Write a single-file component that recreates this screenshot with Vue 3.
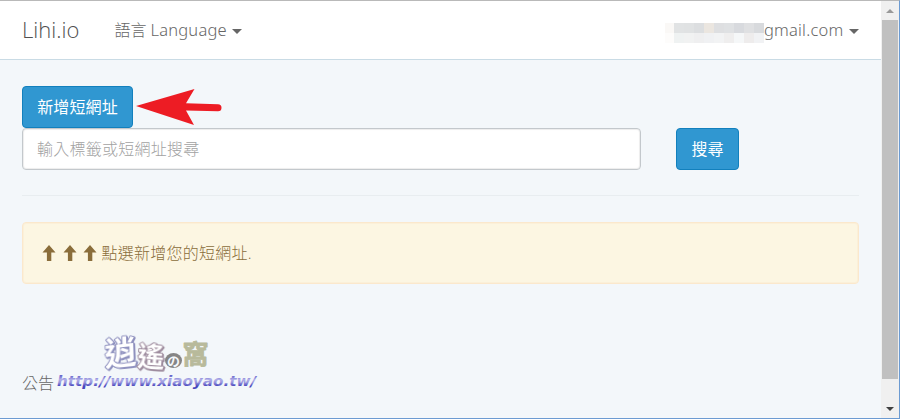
<template>
  <div class="window">
    <div class="page">
      <header class="navbar">
        <a class="brand">Lihi.io</a>
        <a class="nav-link language">
          <span>語言</span>
          <span class="latin">Language</span>
          <span class="caret"></span>
        </a>
        <a class="nav-link account">
          <span class="mosaic">
            <i v-for="(c, i) in mosaic" :key="i" :style="{ background: c }"></i>
          </span>
          <span class="latin mail">gmail.com</span>
          <span class="caret"></span>
        </a>
      </header>

      <main class="content">
        <div class="create-row">
          <button class="btn btn-create">新增短網址</button>
          <svg class="pointer" width="88" height="38" viewBox="0 0 88 38">
            <path d="M0 18 L58.500 1 L50 15.200 L82 16.200 A3.500 3.500 0 0 1 82 23.200 L50 22.500 L58 37 Z" fill="#ed1c24" />
          </svg>
        </div>

        <form class="search-row" @submit.prevent>
          <input v-model="keyword" class="search-input" placeholder="輸入標籤或短網址搜尋" />
          <button class="btn btn-search">搜尋</button>
        </form>

        <hr class="divider" />

        <div class="alert">
          <svg v-for="n in 3" :key="n" class="arrow-up" width="14" height="16" viewBox="0 0 14 16">
            <path d="M7 0 L13.500 7.500 H9.300 V16 H4.900 V7.500 H0.500 Z" fill="#8a6d3b" />
          </svg>
          <span class="alert-text">點選新增您的短網址.</span>
        </div>

        <footer class="notice">公告</footer>
      </main>

      <svg class="watermark" width="210" height="66" viewBox="0 0 210 66">
        <defs>
          <linearGradient id="urlFill" x1="0" y1="0" x2="0" y2="1">
            <stop offset="0.200" stop-color="#6a68cc" />
            <stop offset="0.450" stop-color="#b0aee8" />
            <stop offset="0.620" stop-color="#9997de" />
            <stop offset="0.850" stop-color="#4846bd" />
          </linearGradient>
        </defs>
        <g class="logo-text">
          <text class="glyph-xiao" transform="translate(55 34) rotate(-6) skewX(-4)">逍</text>
          <text class="glyph-yao" transform="translate(87 34) rotate(4)">遙</text>
          <ellipse cx="123.500" cy="28.500" rx="8.500" ry="7.500" fill="#858585" />
          <text class="glyph-no" x="117" y="33.500">の</text>
          <text class="glyph-wo" x="132.500" y="31.500">窩</text>
        </g>
        <text class="logo-url" x="7" y="53.500" textLength="199" lengthAdjust="spacingAndGlyphs">http://www.xiaoyao.tw/</text>
      </svg>
    </div>

    <div class="scrollbar">
      <div class="scroll-btn"><span class="tri tri-up"></span></div>
      <div class="scroll-thumb"></div>
      <div class="scroll-btn scroll-end"><span class="tri tri-down"></span></div>
    </div>
  </div>
</template>

<script setup>
import { ref } from 'vue'

const keyword = ref('')

// two rows of blocks hiding the account name
const mosaic = [
  '#faf8f6', '#e1e3e4', '#e0e2e3', '#dcdee0', '#ebe6e0', '#dedfe1', '#dfe1e3', '#d8dade', '#dfe0e2', '#d8dadd',
  '#fdfcfb', '#eff2f2', '#f1f2f2', '#efeff0', '#f0f1f3', '#f2f3f4', '#efeeee', '#f5f7f8', '#eeecec', '#f1f2f4'
]
</script>

<style>
body {
  margin: 0;
  overflow: hidden;
}
</style>

<style scoped>
.window {
  box-sizing: border-box;
  display: flex;
  width: 900px;
  height: 419px;
  border-top: 1px solid #b9b9b9;
  border-right: 1px solid #6c9bd2;
  border-bottom: 1px solid #6c9bd2;
  background: #f3f7fa;
  color: #666;
  font-family: "Open Sans", "Noto Sans CJK TC", sans-serif;
  font-size: 16px;
  font-weight: 300;
}

.page {
  position: relative;
  width: 881px;
  flex: none;
}

.navbar {
  box-sizing: border-box;
  display: flex;
  align-items: center;
  height: 59px;
  padding: 0 22px;
  background: #fff;
  border-bottom: 1px solid #c9dbe5;
}

.brand {
  width: 92.500px;
  padding-bottom: 2px;
  color: #505050;
  font-size: 22px;
  line-height: 30px;
}

.nav-link {
  display: flex;
  align-items: center;
  line-height: 24px;
}

.latin {
  font-family: "Noto Sans", "Open Sans", sans-serif;
  font-size: 16.500px;
  white-space: nowrap;
}

.language .latin {
  margin-left: 4px;
  letter-spacing: 0.200px;
}

.account {
  margin-left: auto;
}

.mosaic {
  display: grid;
  grid-template-columns: 9px repeat(9, 10px);
  grid-auto-rows: 10px;
  margin-top: 6px;
}

.mail {
  width: 80px;
  letter-spacing: 0.200px;
}

.caret {
  margin-top: 3px;
  margin-left: 5px;
  border: 5px solid transparent;
  border-top-color: #666;
  border-bottom: 0;
}

.content {
  padding: 26px 22px 0;
}

.create-row,
.search-row {
  display: flex;
  align-items: center;
  height: 42px;
}

.pointer {
  margin-left: 3px;
}

.btn {
  box-sizing: border-box;
  height: 42px;
  padding: 0 0 2px;
  border: 1px solid #1280bd;
  border-radius: 4px;
  background: #3097d1;
  color: #fff;
  font: inherit;
  font-weight: 400;
  letter-spacing: 0.100px;
}

.btn-create {
  width: 111px;
}

.btn-search {
  width: 63px;
  margin-left: 35px;
}

.search-input {
  box-sizing: border-box;
  width: 619px;
  height: 42px;
  padding: 0 14px;
  border: 1px solid #c3c8cc;
  border-radius: 4px;
  background: #fff;
  box-shadow: inset 0 0 1px 1px rgba(0, 0, 0, 0.075);
  color: #555;
  font: inherit;
  letter-spacing: 0.250px;
  outline: none;
}

.search-input::placeholder {
  color: #a2a2a2;
  opacity: 1;
}

.divider {
  margin: 25px 0 26px;
  border: 0;
  border-top: 1px solid #e8edf0;
}

.alert {
  box-sizing: border-box;
  display: flex;
  align-items: center;
  gap: 6.500px;
  height: 62px;
  padding: 0 19px;
  border: 1px solid #fbe8cc;
  border-radius: 4px;
  background: #fcf6e2;
  box-shadow: inset 0 0 0 1px rgba(251, 232, 204, 0.4);
  color: #8a6d3b;
}

.alert-text {
  margin-left: -2px;
  padding-bottom: 2px;
  letter-spacing: 0.250px;
}

.notice {
  margin-top: 87px;
  line-height: 24px;
}

.watermark {
  position: absolute;
  left: 50px;
  top: 331px;
  overflow: visible;
}

.logo-text {
  font-family: "Noto Sans CJK TC", sans-serif;
  font-weight: 700;
  stroke-linejoin: round;
}

.glyph-xiao {
  fill: #fff;
  stroke: #9193c0;
  stroke-width: 2px;
  paint-order: stroke;
  font-size: 32px;
  filter: drop-shadow(1.500px 1px 0 #8d8fbd);
}

.glyph-yao {
  fill: #fff;
  stroke: #a08ea0;
  stroke-width: 2px;
  paint-order: stroke;
  font-size: 27px;
  filter: drop-shadow(1px 1px 0 #9c8b9d);
}

.glyph-no {
  fill: #f4f7fa;
  font-size: 13px;
}

.glyph-wo {
  fill: #b8ba9b;
  stroke: #b8ba9b;
  stroke-width: 0.800px;
  font-size: 26px;
}

.logo-url {
  font-family: "DejaVu Sans", sans-serif;
  font-size: 14.500px;
  font-style: italic;
  font-weight: 700;
  fill: url(#urlFill);
}

.scrollbar {
  display: flex;
  flex: 1;
  flex-direction: column;
  background: #f0f0f0;
}

.scroll-btn {
  display: flex;
  align-items: center;
  justify-content: center;
  height: 19px;
}

.scroll-thumb {
  height: 359px;
  margin: 0 1px;
  background: #c0c0c0;
}

.scroll-end {
  flex: 1;
  padding-top: 20px;
}

.tri {
  border: 4px solid transparent;
}

.tri-up {
  border-top: 0;
  border-bottom-color: #999;
}

.tri-down {
  border-top-color: #404040;
  border-bottom: 0;
}
</style>
